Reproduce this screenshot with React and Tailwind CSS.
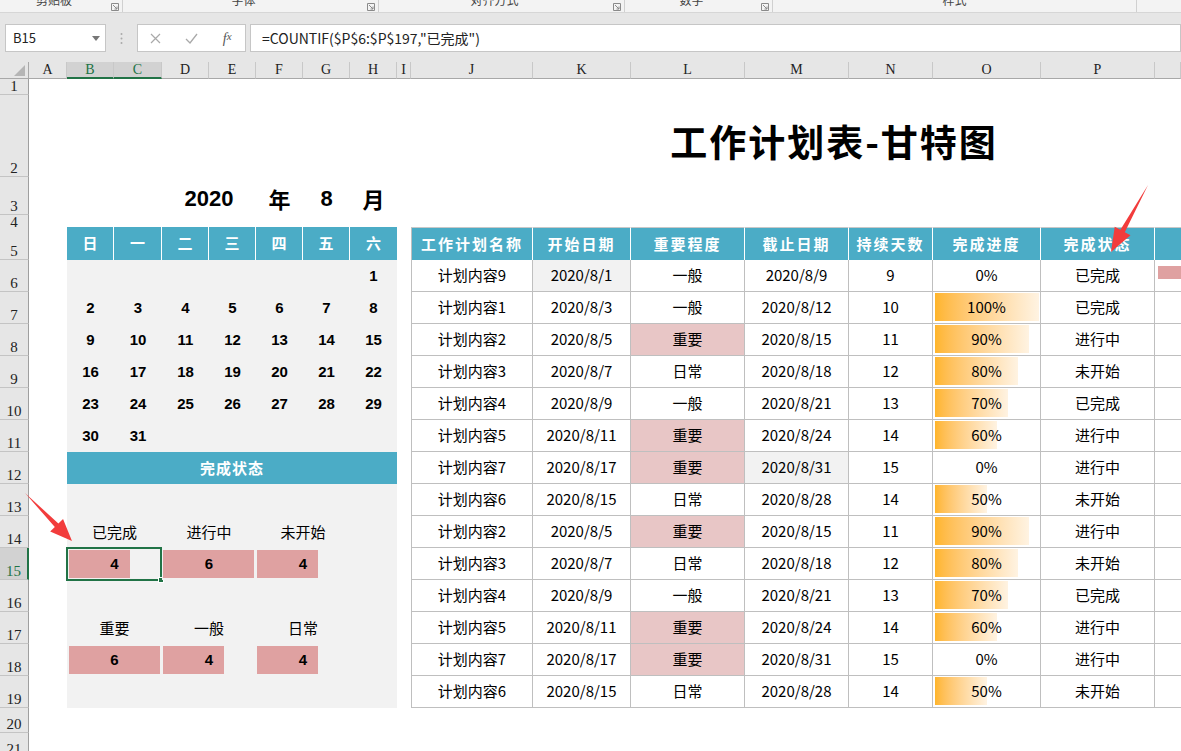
import React from 'react';
import clsx from 'clsx';

// shared column template: row header + A..Q
const COLS = "grid grid-cols-[29px_38px_47px_48px_47px_47px_47px_47px_47px_14px_122px_98px_114px_104px_84px_108px_114px_26px]";
const LETTERS = ["A", "B", "C", "D", "E", "F", "G", "H", "I", "J", "K", "L", "M", "N", "O", "P", ""];

const WEEK = ["日", "一", "二", "三", "四", "五", "六"];
const CAL = [
  [null, null, null, null, null, null, 1],
  [2, 3, 4, 5, 6, 7, 8],
  [9, 10, 11, 12, 13, 14, 15],
  [16, 17, 18, 19, 20, 21, 22],
  [23, 24, 25, 26, 27, 28, 29],
  [30, 31, null, null, null, null, null],
];

const HEAD = ["工作计划名称", "开始日期", "重要程度", "截止日期", "持续天数", "完成进度", "完成状态"];

const TASKS = [
  { name: "计划内容9", start: "2020/8/1", level: "一般", end: "2020/8/9", days: 9, pct: 0, status: "已完成", startGray: true },
  { name: "计划内容1", start: "2020/8/3", level: "一般", end: "2020/8/12", days: 10, pct: 100, status: "已完成" },
  { name: "计划内容2", start: "2020/8/5", level: "重要", end: "2020/8/15", days: 11, pct: 90, status: "进行中" },
  { name: "计划内容3", start: "2020/8/7", level: "日常", end: "2020/8/18", days: 12, pct: 80, status: "未开始" },
  { name: "计划内容4", start: "2020/8/9", level: "一般", end: "2020/8/21", days: 13, pct: 70, status: "已完成" },
  { name: "计划内容5", start: "2020/8/11", level: "重要", end: "2020/8/24", days: 14, pct: 60, status: "进行中" },
  { name: "计划内容7", start: "2020/8/17", level: "重要", end: "2020/8/31", days: 15, pct: 0, status: "进行中", endGray: true },
  { name: "计划内容6", start: "2020/8/15", level: "日常", end: "2020/8/28", days: 14, pct: 50, status: "未开始" },
  { name: "计划内容2", start: "2020/8/5", level: "重要", end: "2020/8/15", days: 11, pct: 90, status: "进行中" },
  { name: "计划内容3", start: "2020/8/7", level: "日常", end: "2020/8/18", days: 12, pct: 80, status: "未开始" },
  { name: "计划内容4", start: "2020/8/9", level: "一般", end: "2020/8/21", days: 13, pct: 70, status: "已完成" },
  { name: "计划内容5", start: "2020/8/11", level: "重要", end: "2020/8/24", days: 14, pct: 60, status: "进行中" },
  { name: "计划内容7", start: "2020/8/17", level: "重要", end: "2020/8/31", days: 15, pct: 0, status: "进行中" },
  { name: "计划内容6", start: "2020/8/15", level: "日常", end: "2020/8/28", days: 14, pct: 50, status: "未开始" },
];

const RIBBON = [
  { label: "剪贴板", w: "w-[123px]", launcher: true },
  { label: "字体", w: "w-[256px]", launcher: true },
  { label: "对齐方式", w: "w-[246px]", launcher: true },
  { label: "数字", w: "w-[148px]", launcher: true },
  { label: "样式", w: "w-[364px]", launcher: false },
];

const Launcher = () => (
  <svg width="8" height="8" viewBox="0 0 8 8" className="mb-[1px]">
    <path d="M0.5 0.5h7v7h-7z" fill="none" stroke="#8a8a8a" />
    <path d="M2 2l4 4M6 3.5V6H3.5" fill="none" stroke="#8a8a8a" />
  </svg>
);

const RowHead = ({ n, active }) => (
  <div
    className={clsx(
      "flex items-end justify-center border-b border-[#c4c4c4] font-['Liberation_Serif',serif] text-[15px] leading-[15px]",
      active
        ? "bg-[#d2d2d2] text-[#217346] border-r-2 border-r-[#217346]"
        : "bg-[#e6e6e6] text-[#222] border-r border-r-[#9f9f9f]"
    )}
  >
    {n}
  </div>
);

const Row = ({ n, h, active, children }) => (
  <div className={clsx(COLS, h)}>
    <RowHead n={n} active={active} />
    {children}
  </div>
);

const Cell = ({ className, children }) => (
  <div className={clsx("flex items-center justify-center border-r border-b border-[#bfbfbf] text-[15px] text-black", className)}>
    {children}
  </div>
);

const StatBar = ({ value, span, left, selected }) => (
  <div className={clsx("relative flex items-center justify-center bg-[#f2f2f2]", span)}>
    <div className={clsx("absolute top-[2px] bottom-[2px] bg-[#dfa1a1]", left)} style={{ width: Math.round((value / 6) * 91) }} />
    <span className="relative font-['Liberation_Sans',sans-serif] text-[15px] font-bold text-black">{value}</span>
    {selected && (
      <div className="absolute -left-px -top-px right-0 -bottom-px border-2 border-[#217346]">
        <div className="absolute -right-[4px] -bottom-[4px] h-[6px] w-[6px] border border-white bg-[#217346]" />
      </div>
    )}
  </div>
);

const Label = ({ span, children }) => (
  <div className={clsx("flex items-center justify-center bg-[#f2f2f2] text-[15px] text-black", span)}>{children}</div>
);

const leftPanel = (i) => {
  if (i < 6) {
    return CAL[i].map((d, k) => (
      <div key={k} className="flex items-center justify-center bg-[#f2f2f2] font-['Liberation_Sans',sans-serif] text-[15px] font-bold text-black">
        {d}
      </div>
    ));
  }
  if (i === 6) {
    return (
      <div className="col-span-7 flex items-center justify-center bg-[#4bacc6] text-[15px] font-bold tracking-[1px] text-white">
        完成状态
      </div>
    );
  }
  if (i === 8) {
    return [
      <Label key="a" span="col-span-2">已完成</Label>,
      <Label key="b" span="col-span-2">进行中</Label>,
      <Label key="c" span="col-span-2">未开始</Label>,
      <Label key="d" />,
    ];
  }
  if (i === 9) {
    return [
      <StatBar key="a" value={4} span="col-span-2" left="left-[2px]" selected />,
      <StatBar key="b" value={6} span="col-span-2" left="left-[1px]" />,
      <StatBar key="c" value={4} span="col-span-2" left="left-[1px]" />,
      <Label key="d" />,
    ];
  }
  if (i === 11) {
    return [
      <Label key="a" span="col-span-2">重要</Label>,
      <Label key="b" span="col-span-2">一般</Label>,
      <Label key="c" span="col-span-2">日常</Label>,
      <Label key="d" />,
    ];
  }
  if (i === 12) {
    return [
      <StatBar key="a" value={6} span="col-span-2" left="left-[2px]" />,
      <StatBar key="b" value={4} span="col-span-2" left="left-[1px]" />,
      <StatBar key="c" value={4} span="col-span-2" left="left-[1px]" />,
      <Label key="d" />,
    ];
  }
  return <div className="col-span-7 bg-[#f2f2f2]" />;
};

const taskRow = (t, i) => [
  <Cell key="j" className="border-l">{t.name}</Cell>,
  <Cell key="k" className={t.startGray ? "bg-[#f2f2f2]" : ""}>{t.start}</Cell>,
  <Cell key="l" className={t.level === "重要" ? "bg-[#e8c6c6]" : ""}>{t.level}</Cell>,
  <Cell key="m" className={t.endGray ? "bg-[#f2f2f2]" : ""}>{t.end}</Cell>,
  <Cell key="n">{t.days}</Cell>,
  <Cell key="o" className="relative">
    {t.pct > 0 && (
      <div
        className="absolute left-[2px] top-[1px] bottom-[2px] bg-gradient-to-r from-[#ffb529] to-[#fff3e2]"
        style={{ width: Math.round(t.pct * 1.04) }}
      />
    )}
    <span className="relative">{t.pct}%</span>
  </Cell>,
  <Cell key="p">{t.status}</Cell>,
  <div key="q" className="relative border-b border-[#bfbfbf]">
    {i === 0 && <div className="absolute left-[3px] top-[6px] h-[13px] right-0 bg-[#dfa1a1]" />}
  </div>,
];

const arrowPoints = (x1, y1, x2, y2, headLen, headHalf, shaft) => {
  const dx = x2 - x1;
  const dy = y2 - y1;
  const len = Math.hypot(dx, dy);
  const ux = dx / len;
  const uy = dy / len;
  const nx = -uy;
  const ny = ux;
  const bx = x2 - ux * headLen;
  const by = y2 - uy * headLen;
  const pts = [
    [x1, y1],
    [bx + nx * shaft, by + ny * shaft],
    [bx + nx * headHalf, by + ny * headHalf],
    [x2, y2],
    [bx - nx * headHalf, by - ny * headHalf],
    [bx - nx * shaft, by - ny * shaft],
  ];
  return pts.map((p) => p.join(",")).join(" ");
};

export default function App() {
  return (
    <div className="relative h-[751px] w-[1181px] overflow-hidden bg-white font-['Noto_Sans_CJK_SC','Noto_Sans',sans-serif]">
      {/* ribbon group labels, cut off */}
      <div className="flex h-[13px] overflow-hidden border-b border-[#d6d6d6] bg-[#f3f3f3]">
        {RIBBON.map((g) => (
          <div key={g.label} className={clsx("flex shrink-0 items-end border-r border-[#d0d0d0]", g.w)}>
            <div className="-mt-[8px] flex-1 self-start text-center text-[12px] leading-[16px] text-[#444]">{g.label}</div>
            {g.launcher && (
              <div className="flex w-[14px] justify-center">
                <Launcher />
              </div>
            )}
          </div>
        ))}
      </div>

      {/* formula bar */}
      <div className="flex h-[49px] items-start bg-[#e6e6e6] pl-[5px] pt-[11px]">
        <div className="flex h-[28px] w-[101px] items-center justify-between border border-[#c6c6c6] bg-white pl-[7px] pr-[5px] text-[13px] text-[#222]">
          <span>B15</span>
          <svg width="8" height="5" viewBox="0 0 8 5">
            <path d="M0 0h8L4 5z" fill="#777" />
          </svg>
        </div>
        <div className="flex h-[28px] w-[31px] items-center justify-center">
          <svg width="3" height="13" viewBox="0 0 3 13">
            <circle cx="1.5" cy="2" r="1" fill="#aaa" />
            <circle cx="1.5" cy="6.5" r="1" fill="#aaa" />
            <circle cx="1.5" cy="11" r="1" fill="#aaa" />
          </svg>
        </div>
        <div className="flex h-[28px] w-[109px] items-center border border-[#c6c6c6] bg-white">
          <div className="flex w-[36px] justify-center">
            <svg width="11" height="11" viewBox="0 0 11 11">
              <path d="M1 1l9 9M10 1l-9 9" stroke="#a9a9a9" strokeWidth="1.2" />
            </svg>
          </div>
          <div className="flex w-[36px] justify-center">
            <svg width="13" height="11" viewBox="0 0 13 11">
              <path d="M1 6l4 4 7-9" fill="none" stroke="#a9a9a9" strokeWidth="1.3" />
            </svg>
          </div>
          <div className="flex w-[36px] justify-center font-['Liberation_Serif',serif] text-[14px] italic text-[#555]">
            f<span className="text-[11px]">x</span>
          </div>
        </div>
        <div className="ml-[4px] flex h-[28px] flex-1 items-center border border-[#c6c6c6] bg-white pl-[11px] text-[14px] text-[#222]">
          =COUNTIF($P$6:$P$197,"已完成")
        </div>
      </div>

      {/* column headers */}
      <div className={clsx(COLS, "h-[17px] bg-[#e6e6e6] font-['Liberation_Serif',serif] text-[14px] leading-none")}>
        <div className="relative border-b border-r border-[#a8a8a8]">
          <svg width="11" height="11" viewBox="0 0 11 11" className="absolute bottom-[2px] right-[3px]">
            <path d="M11 0v11H0z" fill="#b5b5b5" />
          </svg>
        </div>
        {LETTERS.map((l, k) => (
          <div
            key={k}
            className={clsx(
              "flex items-center justify-center border-r border-[#c8c8c8]",
              l === "B" || l === "C"
                ? "border-b-2 border-b-[#217346] bg-[#d2d2d2] text-[#217346]"
                : "border-b border-b-[#a8a8a8] text-[#222]"
            )}
          >
            {l}
          </div>
        ))}
      </div>

      {/* sheet body */}
      <Row n={1} h="h-[16px]">
        <div className="col-span-17" />
      </Row>
      <Row n={2} h="h-[82px]">
        <div className="col-span-9" />
        <div className="col-span-8 flex items-end justify-center pb-[17px] pl-[76px] text-[37px] font-bold leading-none tracking-[2px] text-black">
          工作计划表-甘特图
        </div>
      </Row>
      <Row n={3} h="h-[38px]">
        <div className="col-span-3" />
        <div className="col-span-2 flex items-center justify-center pt-[4px] font-['Liberation_Sans',sans-serif] text-[22px] font-bold text-black">2020</div>
        <div className="flex items-center justify-center pt-[4px] text-[22px] font-bold text-black">年</div>
        <div className="flex items-center justify-center pt-[4px] font-['Liberation_Sans',sans-serif] text-[22px] font-bold text-black">8</div>
        <div className="flex items-center justify-center pt-[4px] text-[22px] font-bold text-black">月</div>
        <div className="col-span-9" />
      </Row>
      <Row n={4} h="h-[12px]">
        <div className="col-span-17" />
      </Row>
      <Row n={5} h="h-[33px]">
        <div />
        {WEEK.map((d, k) => (
          <div
            key={d}
            className={clsx(
              "flex items-center justify-center bg-[#4bacc6] text-[15px] font-bold text-white",
              k < 6 && "border-r border-white"
            )}
          >
            {d}
          </div>
        ))}
        <div />
        {HEAD.map((h, k) => (
          <div
            key={h}
            className={clsx(
              "flex items-center justify-center border-r border-t border-r-white border-t-[#c8c8c8] bg-[#4bacc6] text-[15px] font-bold tracking-[2px] text-white",
              k === 0 && "border-l border-l-[#bfbfbf]"
            )}
          >
            {h}
          </div>
        ))}
        <div className="border-t border-[#c8c8c8] bg-[#4bacc6]" />
      </Row>
      {TASKS.map((t, i) => (
        <Row key={i} n={i + 6} h="h-[32px]" active={i + 6 === 15}>
          <div />
          {leftPanel(i)}
          <div />
          {taskRow(t, i)}
        </Row>
      ))}
      <Row n={20} h="h-[25px]">
        <div className="col-span-17" />
      </Row>
      <Row n={21} h="h-[25px]">
        <div className="col-span-17" />
      </Row>

      {/* annotation arrows */}
      <svg className="pointer-events-none absolute inset-0" width="1181" height="751">
        <polygon points={arrowPoints(25, 493, 72, 541, 22, 9, 2.5)} fill="#f23c3c" />
        <polygon points={arrowPoints(1148, 185, 1111, 252, 24, 9, 2.5)} fill="#f23c3c" />
      </svg>
    </div>
  );
}
